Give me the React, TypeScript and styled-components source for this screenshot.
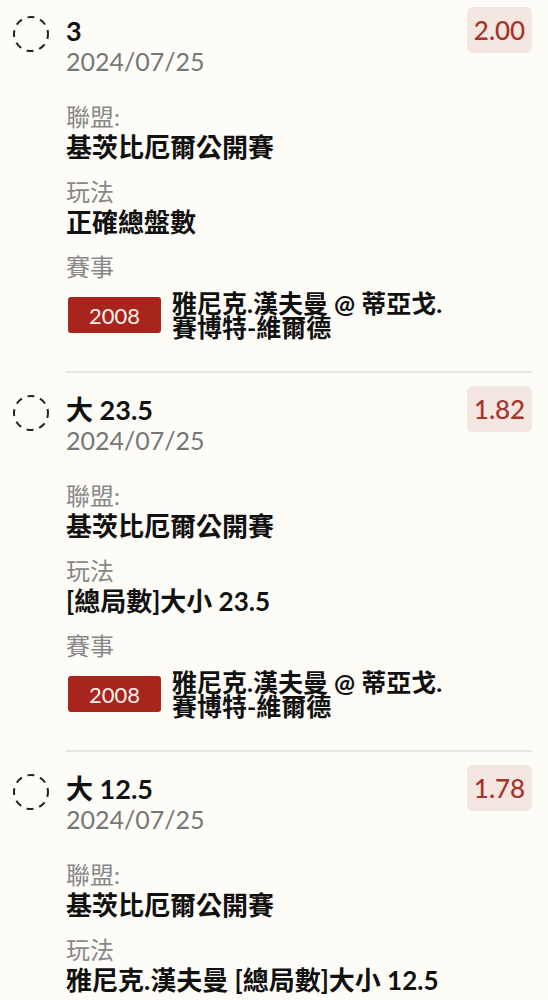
import styled, { createGlobalStyle } from "styled-components";

const GlobalStyle = createGlobalStyle`
  html, body {
    margin: 0;
    padding: 0;
    background: #fdfcf7;
  }
  body {
    font-family: Lato, "Noto Sans CJK TC", sans-serif;
    color: #111;
  }
`;

const List = styled.div`
  display: flex;
  flex-direction: column;
`;

const Item = styled.div`
  display: flex;
  flex-direction: column;
  padding: 7px 16px 0 13px;
`;

const Row = styled.div`
  display: flex;
  align-items: flex-start;
`;

const RadioIcon = styled.svg`
  width: 36px;
  height: 36px;
  margin-top: 9px;
  flex-shrink: 0;
`;

const Content = styled.div`
  flex: 1;
  margin-left: 17px;
  display: flex;
  flex-direction: column;
`;

const Header = styled.div`
  display: flex;
  justify-content: space-between;
  align-items: flex-start;
`;

const TitleBlock = styled.div`
  padding-top: 9px;
  display: flex;
  flex-direction: column;
`;

const Title = styled.div`
  font-size: 27px;
  font-weight: 700;
  line-height: 30px;
`;

const DateText = styled.div`
  font-size: 25px;
  line-height: 30px;
  color: #777;
`;

const Odds = styled.div`
  width: 65px;
  height: 46px;
  border-radius: 6px;
  background: #f4e6e0;
  color: #a5352c;
  font-size: 26px;
  font-weight: 500;
  display: flex;
  align-items: center;
  justify-content: center;
`;

const Fields = styled.div`
  margin-top: 12px;
  display: flex;
  flex-direction: column;
`;

const Field = styled.div`
  margin-top: 14px;
  display: flex;
  flex-direction: column;
`;

const Label = styled.div`
  font-size: 24px;
  line-height: 30px;
  color: #888;
`;

const Value = styled.div`
  font-size: 26px;
  line-height: 31px;
  font-weight: 700;
`;

const EventRow = styled.div`
  margin-top: 9px;
  padding-left: 2px;
  display: flex;
  align-items: center;
`;

const Badge = styled.div`
  width: 93px;
  height: 36px;
  border-radius: 3px;
  background: #a8251e;
  color: #fbf1ea;
  font-size: 22px;
  display: flex;
  align-items: center;
  justify-content: center;
  flex-shrink: 0;
`;

const EventName = styled.div`
  margin-left: 11px;
  width: 285px;
  font-size: 25px;
  line-height: 24px;
  font-weight: 700;
`;

const Divider = styled.div`
  height: 2px;
  background: #e8e6e0;
  margin: 32px 0 6px 52px;
`;

type Bet = {
  title: string;
  odds: string;
  league: string;
  market: string;
  code: string;
  event: string;
};

const bets: Bet[] = [
  {
    title: "3",
    odds: "2.00",
    league: "基茨比厄爾公開賽",
    market: "正確總盤數",
    code: "2008",
    event: "雅尼克.漢夫曼 @ 蒂亞戈.賽博特-維爾德",
  },
  {
    title: "大 23.5",
    odds: "1.82",
    league: "基茨比厄爾公開賽",
    market: "[總局數]大小 23.5",
    code: "2008",
    event: "雅尼克.漢夫曼 @ 蒂亞戈.賽博特-維爾德",
  },
  {
    title: "大 12.5",
    odds: "1.78",
    league: "基茨比厄爾公開賽",
    market: "雅尼克.漢夫曼 [總局數]大小 12.5",
    code: "2008",
    event: "雅尼克.漢夫曼 @ 蒂亞戈.賽博特-維爾德",
  },
];

function Radio() {
  return (
    <RadioIcon viewBox="0 0 36 36">
      <circle
        cx="18"
        cy="18"
        r="17"
        fill="none"
        stroke="#222"
        strokeWidth="2"
        strokeDasharray="7 6"
        strokeDashoffset="2"
      />
    </RadioIcon>
  );
}

function App() {
  return (
    <>
      <GlobalStyle />
      <List>
        {bets.map((b, i) => (
          <Item key={i}>
            <Row>
              <Radio />
              <Content>
                <Header>
                  <TitleBlock>
                    <Title>{b.title}</Title>
                    <DateText>2024/07/25</DateText>
                  </TitleBlock>
                  <Odds>{b.odds}</Odds>
                </Header>
                <Fields>
                  <Field>
                    <Label>聯盟:</Label>
                    <Value>{b.league}</Value>
                  </Field>
                  <Field>
                    <Label>玩法</Label>
                    <Value>{b.market}</Value>
                  </Field>
                  <Field>
                    <Label>賽事</Label>
                    <EventRow>
                      <Badge>{b.code}</Badge>
                      <EventName>{b.event}</EventName>
                    </EventRow>
                  </Field>
                </Fields>
              </Content>
            </Row>
            <Divider />
          </Item>
        ))}
      </List>
    </>
  );
}

export default App;
